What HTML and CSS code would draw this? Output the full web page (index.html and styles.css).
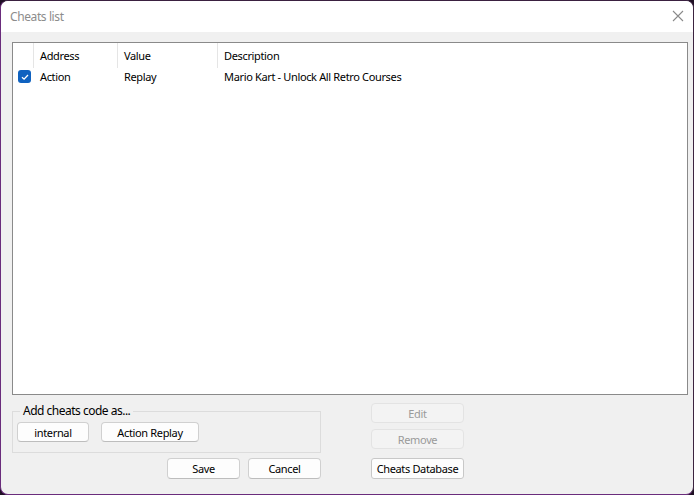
FILE: index.html
```html
<!DOCTYPE html>
<html>
<head>
<meta charset="utf-8">
<link rel="stylesheet" href="styles.css">
</head>
<body>
<div class="window">
  <div class="titlebar">
    <span class="title">Cheats list</span>
    <svg class="close" width="12" height="12" viewBox="0 0 12 12"><path d="M1 1 L11 11 M11 1 L1 11" stroke="#8a8a8a" stroke-width="1.1" fill="none"/></svg>
  </div>
  <div class="content">
    <div class="listbox">
      <div class="row header">
        <div class="cell c0"></div>
        <div class="cell c1">Address</div>
        <div class="cell c2">Value</div>
        <div class="cell c3">Description</div>
      </div>
      <div class="row item">
        <div class="cell c0"><span class="check"><svg width="12" height="12" viewBox="0 0 12 12"><path d="M3 6.2 L5.1 8.2 L9 4" stroke="#fff" stroke-width="1.3" fill="none"/></svg></span></div>
        <div class="cell c1">Action</div>
        <div class="cell c2">Replay</div>
        <div class="cell c3">Mario Kart - Unlock All Retro Courses</div>
      </div>
    </div>
    <div class="bottom">
      <div class="leftcol">
        <fieldset class="group">
          <legend>Add cheats code as...</legend>
          <button class="btn b-internal">internal</button>
          <button class="btn b-ar">Action Replay</button>
        </fieldset>
        <div class="actions">
          <button class="btn b-save">Save</button>
          <button class="btn b-save">Cancel</button>
        </div>
      </div>
      <div class="rightcol">
        <button class="btn side disabled">Edit</button>
        <button class="btn side disabled">Remove</button>
        <button class="btn side db">Cheats Database</button>
      </div>
    </div>
  </div>
</div>
</body>
</html>
```

FILE: styles.css
```css
html, body {
  margin: 0;
  padding: 0;
  background: #1f1024;
}
body {
  font-family: "Noto Sans", "Open Sans", sans-serif;
  font-size: 11px;
  letter-spacing: -0.35px;
  color: #000;
}
.window {
  width: 694px;
  height: 495px;
  box-sizing: border-box;
  border: 1px solid #6a2c7c;
  border-top-color: #3a2040;
  border-right-color: #3c2340;
  border-radius: 8px;
  background: #f0f0f0;
  overflow: hidden;
  display: flex;
  flex-direction: column;
}
.titlebar {
  height: 31px;
  background: #fff;
  display: flex;
  align-items: center;
  justify-content: space-between;
  padding: 0 9px 0 9px;
  flex-shrink: 0;
}
.title {
  font-size: 12px;
  color: #8c8c8c;
  margin-top: -1px;
  letter-spacing: -0.4px;
}
.close { margin-top: -1px; }
.content {
  flex: 1;
  padding: 10px 5px 0 11px;
  display: flex;
  flex-direction: column;
}
.listbox {
  height: 353px;
  box-sizing: border-box;
  background: #fff;
  border: 1px solid #8a8a8a;
}
.row {
  display: flex;
  align-items: center;
}
.header { height: 25px; }
.item { height: 17px; }
.cell {
  box-sizing: border-box;
  padding-left: 6px;
  white-space: nowrap;
}
.header .cell {
  height: 25px;
  line-height: 25px;
  border-right: 1px solid #e5e5e5;
}
.header .c3 { border-right: none; }
.c0 { width: 21px; padding-left: 0; }
.c1 { width: 84px; }
.c2 { width: 100px; }
.c3 { flex: 1; }
.check {
  display: block;
  width: 13px;
  height: 13px;
  margin-left: 5px;
  background: #0f62c0;
  border-radius: 3px;
  position: relative;
}
.check svg { position: absolute; left: 0.5px; top: 0.5px; }
.bottom {
  display: flex;
  margin-top: 8px;
  gap: 50px;
}
.leftcol {
  width: 309px;
  display: flex;
  flex-direction: column;
}
.group {
  margin: 2px 0 0 0;
  padding: 5px 4px 0 4px;
  height: 48px;
  box-sizing: border-box;
  border: 1px solid #dcdcdc;
  display: flex;
  align-items: flex-start;
  gap: 12px;
}
.group legend {
  padding: 0 3px;
  margin-left: 3px;
  font-size: 12px;
  line-height: 12px;
  letter-spacing: -0.5px;
}
.btn {
  font-family: "Noto Sans", "Open Sans", sans-serif;
  font-size: 11px;
  letter-spacing: -0.35px;
  background: #fdfdfd;
  border: 1px solid #d0d0d0;
  border-bottom-color: #bdbdbd;
  border-radius: 4px;
  height: 20px;
  padding: 0;
  color: #000;
  margin: 0;
}
.b-internal { width: 72px; }
.b-ar { width: 98px; }
.actions {
  display: flex;
  justify-content: flex-end;
  gap: 8px;
  margin-top: 5px;
}
.b-save { width: 73px; height: 21px; }
.rightcol {
  display: flex;
  flex-direction: column;
  width: 93px;
}
.side { width: 93px; height: 20px; }
.disabled {
  background: #f3f3f3;
  border-color: #e3e3e3;
  color: #9a9a9a;
}
.side + .side { margin-top: 6px; }
.db {
  margin-top: 9px !important;
  height: 21px;
  border-color: #c8c8c8;
  border-radius: 3px;
}
```
